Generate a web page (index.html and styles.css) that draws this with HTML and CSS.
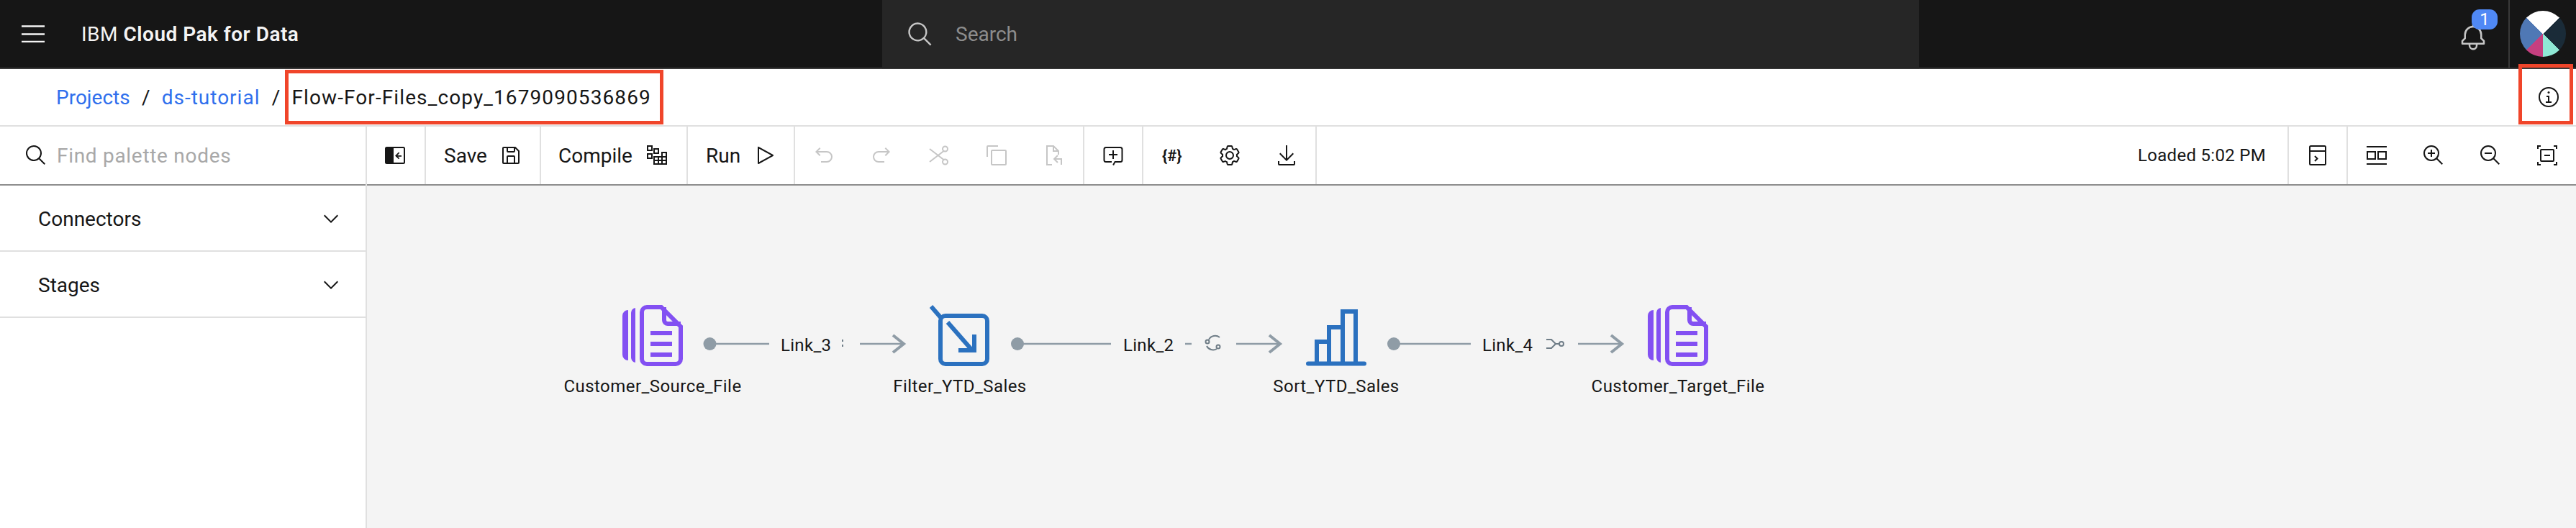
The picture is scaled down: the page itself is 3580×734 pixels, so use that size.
FILE: index.html
```html
<!DOCTYPE html>
<html lang="en">
<head>
  <meta charset="UTF-8">
  <meta name="viewport" content="width=device-width, initial-scale=1.0">
  <title>Flow-For-Files_copy_1679090536869</title>
  <link rel="stylesheet" href="styles.css">
</head>
<body>

  <header class="topbar">
    <div class="topbar-left">
      <svg class="menu-icon" viewBox="0 0 32 24"><path d="M0 1.5h32M0 12.5h32M0 23h32"/></svg>
      <div class="brand">IBM <b>Cloud Pak for Data</b></div>
    </div>
    <div class="global-search">
      <svg class="icon-search-light" viewBox="0 0 32 32"><path d="M29 27.586l-7.552-7.552a11.018 11.018 0 1 0-1.414 1.414L27.586 29zM4 13a9 9 0 1 1 9 9 9.01 9.01 0 0 1-9-9z"/></svg>
      <span>Search</span>
    </div>
    <div class="topbar-right">
      <div class="bell">
        <svg viewBox="0 0 32 32"><path d="M28.707 19.293L26 16.586V13a10.014 10.014 0 0 0-9-9.95V1h-2v2.05A10.014 10.014 0 0 0 6 13v3.586l-2.707 2.707A1 1 0 0 0 3 20v3a1 1 0 0 0 1 1h7v.777a5.152 5.152 0 0 0 4.5 5.199A5.006 5.006 0 0 0 21 25v-1h7a1 1 0 0 0 1-1v-3a1 1 0 0 0-.293-.707zM19 25a3 3 0 0 1-6 0v-1h6zm8-3H5v-1.586l2.707-2.707A1 1 0 0 0 8 17v-4a8 8 0 0 1 16 0v4a1 1 0 0 0 .293.707L27 20.414z"/></svg>
        <span class="badge">1</span>
      </div>
      <div class="avatar-cell"><div class="avatar"></div></div>
    </div>
  </header>

  <nav class="crumbs">
    <a class="crumb-link">Projects</a>
    <span class="crumb-sep">/</span>
    <a class="crumb-link crumb-project">ds-tutorial</a>
    <span class="crumb-sep">/</span>
    <span class="crumb-current">Flow-For-Files_copy_1679090536869</span>
    <svg class="info-icon" viewBox="0 0 32 32"><path d="M17 22v-8h-4v2h2v6h-3v2h8v-2h-3z"/><path d="M16 8a1.5 1.5 0 1 0 1.5 1.5A1.5 1.5 0 0 0 16 8z"/><path d="M16 30a14 14 0 1 1 14-14 14 14 0 0 1-14 14zm0-26a12 12 0 1 0 12 12A12 12 0 0 0 16 4z"/></svg>
  </nav>

  <div class="workspace">
    <aside class="palette">
      <div class="palette-search">
        <svg class="icon" viewBox="0 0 32 32"><path d="M29 27.586l-7.552-7.552a11.018 11.018 0 1 0-1.414 1.414L27.586 29zM4 13a9 9 0 1 1 9 9 9.01 9.01 0 0 1-9-9z"/></svg>
        <span>Find palette nodes</span>
      </div>
      <div class="palette-row">
        <span>Connectors</span>
        <svg class="chevron" viewBox="0 0 32 32"><path d="M16 22L6 12l1.4-1.4 8.6 8.6 8.6-8.6L26 12z"/></svg>
      </div>
      <div class="palette-row">
        <span>Stages</span>
        <svg class="chevron" viewBox="0 0 32 32"><path d="M16 22L6 12l1.4-1.4 8.6 8.6 8.6-8.6L26 12z"/></svg>
      </div>
    </aside>

    <main class="editor">
      <div class="toolbar">
        <div class="tool-group tool-collapse">
          <svg class="icon" viewBox="0 0 32 32"><rect x="3" y="5" width="26" height="22" rx="1.5" fill="none" stroke="#161616" stroke-width="2"/><path d="M3 5h11v22H3z"/><path d="M17 16h8v1.8h-8z"/><path d="M21 11.5l1.3 1.3-3.6 3.6 3.6 3.6-1.3 1.3-4.9-4.9z"/></svg>
        </div>
        <div class="tool-group tool-save">
          <span>Save</span>
          <svg class="icon" viewBox="0 0 32 32"><path d="M27.71 9.29l-5-5A1 1 0 0 0 22 4H6a2 2 0 0 0-2 2v20a2 2 0 0 0 2 2h20a2 2 0 0 0 2-2V10a1 1 0 0 0-.29-.71zM12 6h8v4h-8zm8 20h-8v-8h8zm2 0v-8a2 2 0 0 0-2-2h-8a2 2 0 0 0-2 2v8H6V6h4v4a2 2 0 0 0 2 2h8a2 2 0 0 0 2-2V6.41l4 4V26z"/></svg>
        </div>
        <div class="tool-group tool-compile">
          <span>Compile</span>
          <svg class="icon" viewBox="0 0 32 32"><g fill="none" stroke="#161616" stroke-width="2"><path d="M3 3h6v6H3zM12 7h6v6h-6zM3 14h6v6H3z"/><path d="M12 18h6v10h-6zM18 18h5v10h-5zM23 12h6v16h-6zM23 18h6M12 23h17"/></g></svg>
        </div>
        <div class="tool-group tool-run">
          <span>Run</span>
          <svg class="icon" viewBox="0 0 32 32"><path d="M7 28a1 1 0 0 1-1-1V5a1 1 0 0 1 1.482-.876l20 11a1 1 0 0 1 0 1.752l-20 11A1 1 0 0 1 7 28zM8 6.69v18.62L24.925 16z"/></svg>
        </div>
        <div class="tool-group tool-edit">
          <div class="tool-btn"><svg class="icon" viewBox="0 0 32 32"><path d="M20 10H7.815l3.587-3.586L10 5l-6 6 6 6 1.402-1.415L7.818 12H20a6 6 0 0 1 0 12h-8v2h8a8 8 0 0 0 0-16z"/></svg></div>
          <div class="tool-btn"><svg class="icon" viewBox="0 0 32 32"><path d="M12 10h12.185l-3.587-3.586L22 5l6 6-6 6-1.402-1.415L24.182 12H12a6 6 0 0 0 0 12h8v2h-8a8 8 0 0 1 0-16z"/></svg></div>
          <div class="tool-btn"><svg class="icon" viewBox="0 0 32 32"><g fill="none" stroke="#c6c6c6" stroke-width="2"><circle cx="24.5" cy="7" r="3.5"/><circle cx="24.5" cy="25" r="3.5"/><path d="M22.5 10L3 25M22.5 22L3 7"/></g></svg></div>
          <div class="tool-btn"><svg class="icon" viewBox="0 0 32 32"><path d="M28 10v18H10V10h18m0-2H10a2 2 0 0 0-2 2v18a2 2 0 0 0 2 2h18a2 2 0 0 0 2-2V10a2 2 0 0 0-2-2z"/><path d="M4 18H2V4a2 2 0 0 1 2-2h14v2H4z"/></svg></div>
          <div class="tool-btn"><svg class="icon" viewBox="0 0 32 32"><g fill="none" stroke="#c6c6c6" stroke-width="2"><path d="M13 29H6V3h9l7 7v5M15 3v7h7"/><path d="M26 29v-8h-9M21 16l-5 5 5 5"/></g></svg></div>
        </div>
        <div class="tool-group tool-comment">
          <svg class="icon" viewBox="0 0 32 32"><path d="M17 30l-1.8-.9L18 24h8a1.5 1.5 0 0 0 1.5-1.5v-15A1.5 1.5 0 0 0 26 6H6a1.5 1.5 0 0 0-1.5 1.5v15A1.5 1.5 0 0 0 6 24h8v2H6a3.5 3.5 0 0 1-3.5-3.5v-15A3.5 3.5 0 0 1 6 4h20a3.5 3.5 0 0 1 3.5 3.5v15A3.5 3.5 0 0 1 26 26h-7z"/><path d="M15 9h2v5h5v2h-5v5h-2v-5h-5v-2h5z"/></svg>
        </div>
        <div class="tool-group tool-flow">
          <div class="tool-btn"><span class="params-glyph">{#}</span></div>
          <div class="tool-btn"><svg class="icon" viewBox="0 0 32 32"><path d="M27 16.76c0-.25 0-.5 0-.76s0-.51 0-.77l1.92-1.68A2 2 0 0 0 29.3 11l-2.36-4a2 2 0 0 0-1.73-1 2 2 0 0 0-.64.1l-2.43.82a11.35 11.35 0 0 0-1.31-.75l-.51-2.52a2 2 0 0 0-2-1.61h-4.68a2 2 0 0 0-2 1.61l-.51 2.52a11.48 11.48 0 0 0-1.32.75l-2.38-.86A2 2 0 0 0 6.79 6a2 2 0 0 0-1.73 1L2.7 11a2 2 0 0 0 .41 2.51L5 15.24c0 .25 0 .5 0 .76s0 .51 0 .77l-1.89 1.68A2 2 0 0 0 2.7 21l2.36 4a2 2 0 0 0 1.73 1 2 2 0 0 0 .64-.1l2.43-.82a11.35 11.35 0 0 0 1.31.75l.51 2.52a2 2 0 0 0 2 1.61h4.72a2 2 0 0 0 2-1.61l.51-2.52a11.48 11.48 0 0 0 1.32-.75l2.42.82a2 2 0 0 0 .64.1 2 2 0 0 0 1.73-1l2.28-4a2 2 0 0 0-.41-2.51zM25.21 24l-3.43-1.16a8.86 8.86 0 0 1-2.71 1.57L18.36 28h-4.72l-.71-3.55a9.36 9.36 0 0 1-2.7-1.57L6.79 24l-2.36-4 2.72-2.4a8.9 8.9 0 0 1 0-3.13L4.43 12l2.36-4 3.43 1.16a8.86 8.86 0 0 1 2.71-1.57L13.64 4h4.72l.71 3.55a9.36 9.36 0 0 1 2.7 1.57L25.21 8l2.36 4-2.72 2.4a8.9 8.9 0 0 1 0 3.13L27.57 20z"/><path d="M16 22a6 6 0 1 1 6-6 5.94 5.94 0 0 1-6 6zm0-10a3.91 3.91 0 0 0-4 4 3.91 3.91 0 0 0 4 4 3.91 3.91 0 0 0 4-4 3.91 3.91 0 0 0-4-4z"/></svg></div>
          <div class="tool-btn"><svg class="icon" viewBox="0 0 32 32"><path d="M26 24v4H6v-4H4v4a2 2 0 0 0 2 2h20a2 2 0 0 0 2-2v-4z"/><path d="M26 14l-1.41-1.41L17 20.17V2h-2v18.17l-7.59-7.58L6 14l10 10 10-10z"/></svg></div>
        </div>
        <div class="tool-status">Loaded 5:02 PM</div>
        <div class="tool-group tool-terminal">
          <svg class="icon" viewBox="0 0 32 32"><g fill="none" stroke="#161616" stroke-width="2"><rect x="5" y="3" width="22" height="26" rx="1.5"/><path d="M5 10h22M12 17l3.5 3.5-3.5 3.500"/></g></svg>
        </div>
        <div class="tool-group tool-view">
          <div class="tool-btn"><svg class="icon" viewBox="0 0 32 32"><g fill="none" stroke="#161616" stroke-width="2"><path d="M2 4h28M2 28h28"/><rect x="3" y="11" width="11" height="10"/><rect x="18" y="11" width="11" height="10"/></g></svg></div>
          <div class="tool-btn"><svg class="icon" viewBox="0 0 32 32"><path d="M18 12h-4V8h-2v4H8v2h4v4h2v-4h4v-2z"/><path d="M21.48 20.06A10.93 10.93 0 0 0 24 13a11 11 0 1 0-11 11 10.93 10.93 0 0 0 7.06-2.52L27.59 29 29 27.59zM13 22a9 9 0 1 1 9-9 9 9 0 0 1-9 9z"/></svg></div>
          <div class="tool-btn"><svg class="icon" viewBox="0 0 32 32"><path d="M8 12h10v2H8z"/><path d="M21.48 20.06A10.93 10.93 0 0 0 24 13a11 11 0 1 0-11 11 10.93 10.93 0 0 0 7.06-2.52L27.59 29 29 27.59zM13 22a9 9 0 1 1 9-9 9 9 0 0 1-9 9z"/></svg></div>
          <div class="tool-btn"><svg class="icon" viewBox="0 0 32 32"><g fill="none" stroke="#161616" stroke-width="2"><path d="M3 7V3h4M25 3h4v4M29 25v4h-4M7 29H3v-4"/><rect x="7" y="8" width="18" height="16" rx="1"/><path d="M12 16h8"/></g></svg></div>
        </div>
      </div>

      <div class="canvas">
        <svg class="links" viewBox="0 0 3070 476">
          <g class="link">
            <circle cx="476.5" cy="220" r="9"/>
            <path d="M476 220H559M685 220H746"/>
            <path class="link-head" d="M731 208l15 12-15 12"/>
            <text class="link-label" x="575" y="230">Link_3</text>
            <path class="link-deco" d="M661 214v3M661 221v3"/>
          </g>
          <g class="link">
            <circle cx="904" cy="220" r="9"/>
            <path d="M904 220H1034M1137 220H1146M1208 220H1269"/>
            <path class="link-head" d="M1254 208l15 12-15 12"/>
            <text class="link-label" x="1051" y="230">Link_2</text>
            <path class="link-deco" d="M1170 214a10 10 0 0 1 15-3M1181 227a10 10 0 0 1-14-4"/>
            <circle class="link-ring" cx="1168" cy="217" r="2.5"/>
            <circle class="link-ring" cx="1183" cy="224" r="2.5"/>
          </g>
          <g class="link">
            <circle cx="1427" cy="220" r="9"/>
            <path d="M1427 220H1534M1683 220H1744"/>
            <path class="link-head" d="M1729 208l15 12-15 12"/>
            <text class="link-label" x="1550" y="230">Link_4</text>
            <path class="link-deco" d="M1639 214h7l6 6h5M1639 226h7l6-6"/>
            <circle class="link-ring" cx="1660" cy="220" r="3"/>
          </g>
        </svg>

        <div class="node node-source">
          <svg class="node-icon file-icon" viewBox="0 0 84 85">
            <path class="file-bar" d="M8 7v70a8 8 0 0 1-8-8V15a8 8 0 0 1 8-8zM18 4v76a7 7 0 0 1-6-7V11a7 7 0 0 1 6-7z"/>
            <path d="M34 3H54L81 30V75a7 7 0 0 1-7 7H34a7 7 0 0 1-7-7V10a7 7 0 0 1 7-7zM58 3V21a5 5 0 0 0 5 5H81M39 39H69M39 54H69M39 69H69"/>
          </svg>
          <div class="node-label">Customer_Source_File</div>
        </div>

        <div class="node node-filter">
          <svg class="node-icon proc-icon" viewBox="0 0 84 85">
            <rect x="15" y="15" width="65" height="67" rx="7"/>
            <path d="M2 2L15 17M25 24L60 64M62 41V63H40"/>
          </svg>
          <div class="node-label">Filter_YTD_Sales</div>
        </div>

        <div class="node node-sort">
          <svg class="node-icon proc-icon" viewBox="0 0 84 85">
            <path d="M15 81V51H32M32 81V31H51M51 81V9H69V81"/>
            <path class="sort-base" d="M3 81.5H81"/>
          </svg>
          <div class="node-label">Sort_YTD_Sales</div>
        </div>

        <div class="node node-target">
          <svg class="node-icon file-icon" viewBox="0 0 84 85">
            <path class="file-bar" d="M8 7v70a8 8 0 0 1-8-8V15a8 8 0 0 1 8-8zM18 4v76a7 7 0 0 1-6-7V11a7 7 0 0 1 6-7z"/>
            <path d="M34 3H54L81 30V75a7 7 0 0 1-7 7H34a7 7 0 0 1-7-7V10a7 7 0 0 1 7-7zM58 3V21a5 5 0 0 0 5 5H81M39 39H69M39 54H69M39 69H69"/>
          </svg>
          <div class="node-label">Customer_Target_File</div>
        </div>
      </div>
    </main>
  </div>

  <div class="callout callout-title"></div>
  <div class="callout callout-info"></div>

</body>
</html>
```

FILE: styles.css
```css
* {
  box-sizing: border-box;
}

body {
  margin: 0;
  height: 734px;
  overflow: hidden;
  position: relative;
  display: flex;
  flex-direction: column;
  background: #fff;
  color: #161616;
  font-family: Roboto, "Liberation Sans", sans-serif;
  font-size: 28px;
}

svg {
  display: block;
  fill: currentColor;
}

.icon {
  width: 32px;
  height: 32px;
  flex: none;
  fill: #161616;
}

/* top bar */
.topbar {
  height: 96px;
  flex: none;
  display: grid;
  grid-template-columns: 1226px 1441px 1fr;
  background: #161616;
  border-bottom: 2px solid #393939;
}

.topbar-left {
  display: flex;
  align-items: center;
  padding-left: 30px;
  gap: 51px;
}

.menu-icon {
  width: 32px;
  height: 24px;
  fill: none;
  stroke: #f4f4f4;
  stroke-width: 2.5;
}

.brand {
  color: #f4f4f4;
  letter-spacing: 0.5px;
}

.brand b {
  font-weight: 600;
}

.global-search {
  display: flex;
  align-items: center;
  padding-left: 34px;
  gap: 30px;
  background: #262626;
  color: #8d8d8d;
  margin-bottom: -1px;
}

.icon-search-light {
  width: 38px;
  height: 38px;
  fill: #c6c6c6;
}

.topbar-right {
  display: flex;
  justify-content: flex-end;
  align-items: stretch;
}

.bell {
  position: relative;
  align-self: center;
  margin-right: 29px;
  margin-top: 10px;
  color: #c6c6c6;
}

.bell svg {
  width: 40px;
  height: 40px;
}

.badge {
  position: absolute;
  left: 18px;
  top: -19px;
  width: 36px;
  height: 28px;
  border-radius: 11px;
  background: #5089f5;
  color: #fff;
  font-size: 24px;
  line-height: 28px;
  text-align: center;
}

.avatar-cell {
  width: 94px;
  display: flex;
  align-items: center;
  padding-left: 14px;
  border-left: 2px solid #393939;
}

.avatar {
  width: 64px;
  height: 64px;
  border-radius: 50%;
  background: conic-gradient(#fff 0 45deg, #1a2b38 45deg 135deg, #8fe8d5 135deg 180deg, #c63f80 180deg 225deg, #4f78b5 225deg 315deg, #fff 315deg);
}

/* breadcrumb */
.crumbs {
  height: 80px;
  flex: none;
  display: flex;
  align-items: center;
  padding: 0 22px 0 78px;
  border-bottom: 2px solid #e0e0e0;
}

.crumb-link {
  color: #2f6fed;
}

.crumb-project {
  letter-spacing: 1px;
}

.crumb-sep {
  width: 44px;
  text-align: center;
}

.crumb-current {
  letter-spacing: 1.1px;
}

.info-icon {
  width: 32px;
  height: 32px;
  margin-left: auto;
  fill: #161616;
}

/* palette */
.workspace {
  flex: 1;
  display: flex;
  min-height: 0;
}

.palette {
  width: 510px;
  flex: none;
  border-right: 2px solid #e0e0e0;
}

.palette-search {
  height: 82px;
  display: flex;
  align-items: center;
  gap: 13px;
  padding-left: 34px;
  border-bottom: 2px solid #8d8d8d;
  color: #a8a8a8;
  letter-spacing: 0.7px;
}

.palette-row {
  height: 92px;
  display: flex;
  align-items: center;
  justify-content: space-between;
  padding: 2px 32px 0 53px;
  border-bottom: 2px solid #e0e0e0;
}

.palette-row .chevron {
  width: 32px;
  height: 32px;
  fill: #161616;
}

/* toolbar */
.editor {
  flex: 1;
  min-width: 0;
  display: flex;
  flex-direction: column;
}

.toolbar {
  height: 82px;
  flex: none;
  display: flex;
  align-items: stretch;
  border-bottom: 2px solid #8d8d8d;
}

.tool-group {
  display: flex;
  align-items: center;
  flex: none;
  border-right: 2px solid #e0e0e0;
}

.tool-btn {
  width: 80px;
  display: flex;
  align-items: center;
  justify-content: center;
}

.tool-collapse,
.tool-comment {
  width: 82px;
  justify-content: center;
}

.tool-collapse {
  padding-right: 3px;
}

.tool-save {
  width: 160px;
  padding-left: 25px;
  gap: 17px;
}

.tool-compile {
  width: 204px;
  padding-left: 24px;
  gap: 18px;
}

.tool-run {
  width: 149px;
  padding-left: 25px;
  gap: 18px;
}

.tool-edit {
  width: 402px;
}

.tool-edit .icon {
  fill: #c6c6c6;
}

.tool-flow {
  width: 241px;
}

.params-glyph {
  font-size: 22px;
  font-weight: 700;
}

.tool-status {
  margin-left: auto;
  padding-right: 30px;
  align-self: center;
  font-size: 24px;
  letter-spacing: 0.3px;
}

.tool-terminal {
  width: 84px;
  justify-content: center;
  border-left: 2px solid #e0e0e0;
}

.tool-view {
  width: 317px;
  border-right: 0;
}

/* canvas */
.canvas {
  flex: 1;
  position: relative;
  background: #f4f4f4;
}

.links {
  position: absolute;
  left: 0;
  top: 0;
  width: 3070px;
  height: 476px;
}

.link path {
  fill: none;
  stroke: #8f9ca6;
  stroke-width: 2.5;
}

.link .link-head {
  stroke-width: 4;
}

.link circle {
  fill: #8f9ca6;
}

.link .link-ring {
  fill: none;
  stroke: #6f7d87;
  stroke-width: 2;
}

.link .link-deco {
  stroke: #6f7d87;
  stroke-width: 2;
}

.link-label {
  fill: #161616;
  stroke: none;
  font-size: 24px;
  letter-spacing: 0.3px;
}

.node {
  position: absolute;
  top: 166px;
  width: 300px;
  display: flex;
  flex-direction: column;
  align-items: center;
}

.node-source { left: 247px; }
.node-filter { left: 674px; }
.node-sort { left: 1197px; }
.node-target { left: 1672px; }

.node-icon {
  width: 84px;
  height: 85px;
}

.node-icon path,
.node-icon rect {
  fill: none;
  stroke-width: 6;
}

.file-icon {
  stroke: #8350f2;
}

.file-icon .file-bar {
  fill: #8350f2;
  stroke: none;
}

.proc-icon {
  stroke: #2b71bf;
}

.proc-icon .sort-base {
  stroke-linecap: round;
}

.node-label {
  margin-top: 13px;
  font-size: 24px;
  line-height: 30px;
  letter-spacing: 0.45px;
  white-space: nowrap;
}

/* red annotation boxes drawn over the screenshot */
.callout {
  position: absolute;
  border: 5px solid #f0452a;
}

.callout-title {
  left: 396px;
  top: 97px;
  width: 526px;
  height: 76px;
}

.callout-info {
  left: 3500px;
  top: 89px;
  width: 76px;
  height: 84px;
}
```
